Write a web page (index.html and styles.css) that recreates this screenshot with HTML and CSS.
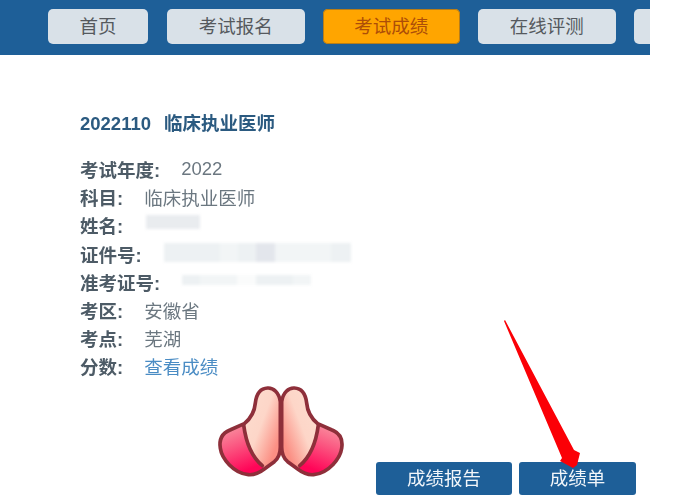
FILE: index.html
```html
<!DOCTYPE html>
<html lang="zh-CN">
  <head>
    <meta charset="UTF-8" />
    <meta name="viewport" content="width=device-width, initial-scale=1.0" />
    <title>考试成绩</title>
    <link rel="stylesheet" href="styles.css">
  </head>
  <body>
    <div class="page">
      <div class="nav">
        <a class="nav-item nav-short">首页</a>
        <a class="nav-item">考试报名</a>
        <a class="nav-item active">考试成绩</a>
        <a class="nav-item">在线评测</a>
        <a class="nav-item"></a>
      </div>

      <div class="content">
        <h3 class="exam-title"><span>2022110</span><span>临床执业医师</span></h3>

        <div class="info">
          <div class="info-row"><b>考试年度:</b><span>2022</span></div>
          <div class="info-row"><b>科目:</b><span>临床执业医师</span></div>
          <div class="info-row"><b>姓名:</b><span class="mask mask-name"></span></div>
          <div class="info-row">
            <b>证件号:</b>
            <span class="mask mask-id">
              <i class="tone-a seg-56"></i><i class="tone-b seg-18"></i><i class="tone-a seg-18"></i><i class="tone-c seg-19"></i><i class="tone-b seg-56"></i><i class="tone-a seg-20"></i>
            </span>
          </div>
          <div class="info-row">
            <b>准考证号:</b>
            <span class="mask mask-no">
              <i class="tone-a seg-18"></i><i class="tone-b seg-37"></i><i class="tone-blank seg-19"></i><i class="tone-a seg-37"></i><i class="tone-b seg-18"></i>
            </span>
          </div>
          <div class="info-row"><b>考区:</b><span>安徽省</span></div>
          <div class="info-row"><b>考点:</b><span>芜湖</span></div>
          <div class="info-row"><b>分数:</b><a class="link">查看成绩</a></div>
        </div>

        <div class="actions">
          <a class="btn btn-report">成绩报告</a>
          <a class="btn btn-sheet">成绩单</a>
        </div>
      </div>

      <!-- sticker and arrow sit on top of the screenshot -->
      <svg class="hands" viewBox="0 0 450 330" width="150" height="110">
        <defs>
          <linearGradient id="sleeve" x1="0" y1="0" x2="0.35" y2="1">
            <stop offset="0" stop-color="#f8a0a8" />
            <stop offset="0.5" stop-color="#fb5580" />
            <stop offset="1" stop-color="#ff0558" />
          </linearGradient>
          <linearGradient id="palm" x1="0" y1="0" x2="1" y2="0.55">
            <stop offset="0" stop-color="#fde4d6" />
            <stop offset="0.7" stop-color="#fdd6c8" />
            <stop offset="1" stop-color="#fb8f84" />
          </linearGradient>
          <g id="hand">
            <path d="M226 80C222 52 205 38 188 39C166 40 154 58 151 84C149 108 140 128 118 146L75 165C50 175 42 195 46 220C50 250 85 295 130 299C150 301 165 292 178 282L208 260C220 250 226 236 226 216Z" fill="url(#palm)" />
            <path d="M118 148L75 165C50 175 42 195 46 220C50 250 85 295 130 299C150 301 165 292 176 278C142 254 122 200 118 148Z" fill="url(#sleeve)" />
            <path d="M226 80C222 52 205 38 188 39C166 40 154 58 151 84C149 108 140 128 118 146L75 165C50 175 42 195 46 220C50 250 85 295 130 299C150 301 165 292 178 282L208 260C220 250 226 236 226 216Z" fill="none" stroke="#8e2f3a" stroke-width="11" stroke-linejoin="round" />
            <path d="M116 150C122 196 138 244 172 272" fill="none" stroke="#8e2f3a" stroke-width="11" stroke-linecap="round" />
          </g>
        </defs>
        <use href="#hand" />
        <use href="#hand" transform="translate(456,0) scale(-1,1)" />
      </svg>

      <svg class="arrow" viewBox="0 0 84 152" width="84" height="152">
        <path d="M2 2L3 1L72 131L78 134L75 146L71 149L58 142L60 139Z" fill="#fb0006" />
      </svg>
    </div>
  </body>
</html>
```

FILE: styles.css
```css
body {
  font-family: "Liberation Sans", "Noto Sans CJK SC", sans-serif;
  background-color: #fff;
  margin: 0;
  padding: 0;
  font-size: 18.5px;
}
.page {
  position: relative;
  width: 694px;
  height: 500px;
  overflow: hidden;
  filter: blur(0.4px);
}
.nav {
  display: flex;
  gap: 18px;
  width: 650px;
  height: 55px;
  box-sizing: border-box;
  padding: 9px 0 0 48px;
  background-color: #1e5f98;
  overflow: hidden;
}
.nav-item {
  flex: 0 0 137.5px;
  height: 35px;
  line-height: 35px;
  text-align: center;
  color: #55595e;
  background-color: #d9e1e8;
  border-radius: 5px;
}
.nav-short {
  flex-basis: 100px;
  margin-right: 1px;
}
.nav-item.active {
  color: #ac4d08;
  background-color: #ffa500;
  box-shadow: inset 0 0 0 1px #b87d18;
}
.content {
  width: 650px;
  box-sizing: border-box;
  padding: 55px 14px 0 80px;
}
.exam-title {
  display: flex;
  gap: 13px;
  margin: 0;
  height: 28px;
  line-height: 28px;
  font-size: 18.5px;
  color: #2b5a80;
}
.info {
  margin-top: 17px;
}
.info-row {
  display: flex;
  align-items: center;
  gap: 21px;
  height: 28.2px;
  color: #6b7780;
}
.info-row b {
  color: #4d5b66;
}
.link {
  color: #4a8cc4;
}
.mask {
  display: flex;
  margin-left: 1px;
  filter: blur(1.5px);
}
.mask i {
  display: block;
}
.mask-name {
  width: 54px;
  height: 14px;
  margin-top: -6px;
  margin-left: 2px;
  background-color: #e9ecef;
}
.mask-id {
  height: 19px;
  margin-top: -2px;
}
.mask-no {
  height: 10px;
  margin-top: -4px;
}
.tone-a {
  background-color: #edf1f3;
}
.tone-b {
  background-color: #f2f5f6;
}
.tone-c {
  background-color: #e3e6ec;
}
.tone-blank {
  background-color: #fafbfb;
}
.seg-18 {
  width: 18px;
}
.seg-19 {
  width: 19px;
}
.seg-20 {
  width: 20px;
}
.seg-37 {
  width: 37px;
}
.seg-56 {
  width: 56px;
}
.actions {
  display: flex;
  justify-content: flex-end;
  gap: 7px;
  margin-top: 81px;
}
.btn {
  height: 33px;
  line-height: 33px;
  text-align: center;
  color: #f2f6fa;
  background-color: #1e5f98;
  border-radius: 3px;
}
.btn-report {
  width: 136px;
}
.btn-sheet {
  width: 117px;
}
.hands {
  position: absolute;
  left: 205px;
  top: 375px;
}
.arrow {
  position: absolute;
  left: 502px;
  top: 319px;
}
```
